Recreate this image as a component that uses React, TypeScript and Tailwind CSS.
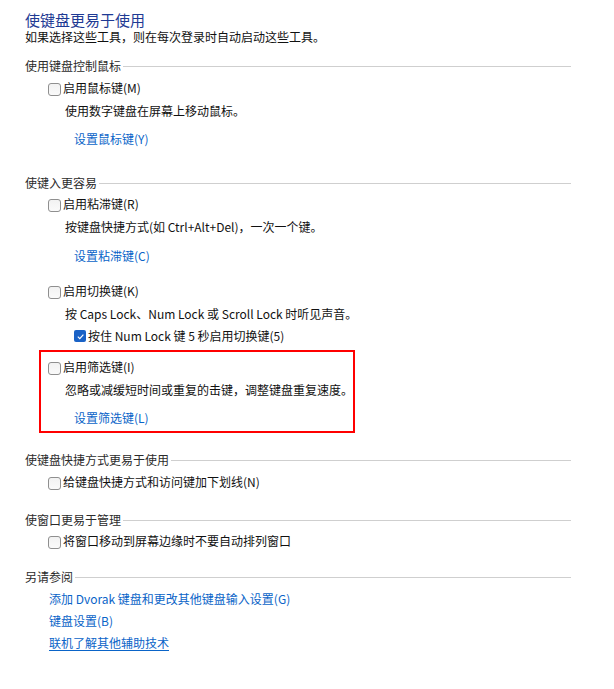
import React from "react";

const font = { fontFamily: '"Noto Sans CJK SC", "Noto Sans", sans-serif' };

function Box({ checked = false }: { checked?: boolean }) {
  if (checked) {
    return (
      <span className="w-[12px] h-[12px] rounded-[2px] bg-[#1a62c6] flex items-center justify-center shrink-0">
        <svg width="9" height="9" viewBox="0 0 10 10">
          <path d="M2 5.2 L4.2 7.3 L8.2 2.8" stroke="#fff" strokeWidth="1.3" fill="none" />
        </svg>
      </span>
    );
  }
  return <span className="w-[13px] h-[13px] rounded-[3px] border border-[#8f8f8f] bg-gradient-to-b from-[#f2f2f2] to-[#fafafa] shrink-0 mt-[2px]" />;
}

function Header({ text, mt }: { text: string; mt: string }) {
  return (
    <div className={`flex items-center h-[20px] ${mt}`}>
      <span className="text-[12px] text-[#2b2b2b] whitespace-nowrap">{text}</span>
      <span className="flex-1 h-[2px] border-t border-[#cfcfcf] border-b-white ml-[2px] mt-[1px]" />
    </div>
  );
}

function Check({ label, mt, checked = false, indent = "ml-[23px]" }: { label: string; mt: string; checked?: boolean; indent?: string }) {
  return (
    <div className={`flex items-center h-[20px] gap-[2px] ${mt} ${indent}`}>
      <Box checked={checked} />
      <span className="text-[12px] text-[#111] whitespace-nowrap">{label}</span>
    </div>
  );
}

function Desc({ text, mt, indent = "ml-[40px]" }: { text: string; mt: string; indent?: string }) {
  return <div className={`h-[20px] flex items-center text-[12px] text-[#111] whitespace-nowrap ${mt} ${indent}`}>{text}</div>;
}

function Link({ text, mt, indent = "ml-[49px]", underline = false }: { text: string; mt: string; indent?: string; underline?: boolean }) {
  return (
    <div className={`h-[20px] flex items-center text-[12px] text-[#0a64c8] whitespace-nowrap ${mt} ${indent}`}>
      <span className={underline ? "underline underline-offset-2" : ""}>{text}</span>
    </div>
  );
}

export default function App() {
  return (
    <div className="w-[614px] h-[689px] bg-white pl-[25px] pr-[43px] overflow-hidden" style={font}>
      <div className="pt-[10px] h-[30px] flex items-center text-[15px] text-[#1e3a94] whitespace-nowrap">使键盘更易于使用</div>
      <div className="h-[14px] flex items-center text-[12px] text-[#111] whitespace-nowrap">如果选择这些工具，则在每次登录时自动启动这些工具。</div>

      <Header text="使用键盘控制鼠标" mt="mt-[12px]" />
      <Check label="启用鼠标键(M)" mt="mt-[2px]" />
      <Desc text="使用数字键盘在屏幕上移动鼠标。" mt="mt-[3px]" />
      <Link text="设置鼠标键(Y)" mt="mt-[8px]" />

      <Header text="使键入更容易" mt="mt-[24px]" />
      <Check label="启用粘滞键(R)" mt="mt-[1px]" />
      <Desc text="按键盘快捷方式(如 Ctrl+Alt+Del)，一次一个键。" mt="mt-[3px]" />
      <Link text="设置粘滞键(C)" mt="mt-[9px]" />

      <Check label="启用切换键(K)" mt="mt-[15px]" />
      <Desc text="按 Caps Lock、Num Lock 或 Scroll Lock 时听见声音。" mt="mt-[3px]" />
      <Check label="按住 Num Lock 键 5 秒启用切换键(5)" mt="mt-[2px]" checked indent="ml-[49px]" />

      <div className="mt-[4px] ml-[14px] w-[316px] border-2 border-[#ff0000] pt-[5px] pb-[3px]">
        <Check label="启用筛选键(I)" mt="mt-0" indent="ml-[7px]" />
        <Desc text="忽略或减缓短时间或重复的击键，调整键盘重复速度。" mt="mt-[3px]" indent="ml-[24px]" />
        <Link text="设置筛选键(L)" mt="mt-[8px]" indent="ml-[33px]" />
      </div>

      <Header text="使键盘快捷方式更易于使用" mt="mt-[17px]" />
      <Check label="给键盘快捷方式和访问键加下划线(N)" mt="mt-[2px]" />

      <Header text="使窗口更易于管理" mt="mt-[18px]" />
      <Check label="将窗口移动到屏幕边缘时不要自动排列窗口" mt="mt-[1px]" />

      <Header text="另请参阅" mt="mt-[16px]" />
      <Link text="添加 Dvorak 键盘和更改其他键盘输入设置(G)" mt="mt-[2px]" indent="ml-[24px]" />
      <Link text="键盘设置(B)" mt="mt-[2px]" indent="ml-[24px]" />
      <Link text="联机了解其他辅助技术" mt="mt-[2px]" indent="ml-[24px]" underline />
    </div>
  );
}
